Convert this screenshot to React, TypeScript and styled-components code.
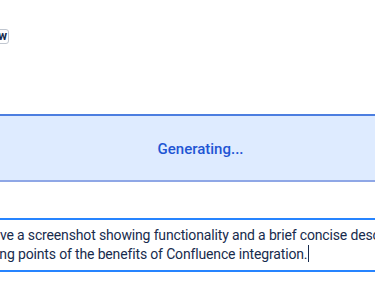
import styled, { createGlobalStyle } from "styled-components";

const GlobalStyle = createGlobalStyle`
  html, body {
    margin: 0;
    padding: 0;
    background: #ffffff;
    overflow: hidden;
  }
  body {
    font-family: Roboto, "Liberation Sans", sans-serif;
    color: #172b4d;
  }
`;

const Page = styled.div`
  width: 375px;
  height: 302px;
  overflow: hidden;
  display: flex;
  flex-direction: column;
`;

const Toolbar = styled.div`
  display: flex;
  align-items: center;
  padding-top: 29px;
  height: 15px;
`;

const ToolButton = styled.button`
  margin-left: -41px;
  height: 15px;
  padding: 0 1px 0 4px;
  border: 1px solid #c1c7d0;
  border-radius: 3px;
  background: #ffffff;
  font-family: inherit;
  font-size: 12px;
  font-weight: 700;
  line-height: 13px;
  color: #172b4d;
`;

const StatusPanel = styled.div`
  margin: 70px -10px 0;
  height: 64px;
  display: flex;
  align-items: center;
  justify-content: center;
  background: #deebff;
  border-top: 2px solid #4c7ee0;
  border-bottom: 2px solid #8fa7e6;
`;

const StatusText = styled.span`
  font-size: 15px;
  font-weight: 500;
  color: #1f55d4;
  margin-left: 26px;
  margin-top: 2px;
`;

const PromptBox = styled.div`
  margin: 36px -10px 0;
  padding: 6px 0 6px 10px;
  border-top: 2px solid #2684ff;
  border-bottom: 2px solid #2684ff;
  font-size: 14px;
  letter-spacing: -0.15px;
  line-height: 19px;
  color: #172b4d;
`;

const PromptLine = styled.div<{ $shift: number }>`
  white-space: nowrap;
  margin-left: ${(p) => -p.$shift}px;
`;

const Caret = styled.span`
  display: inline-block;
  width: 1px;
  height: 17px;
  margin-left: 1px;
  vertical-align: -3px;
  background: #172b4d;
`;

export default function App() {
  return (
    <Page>
      <GlobalStyle />
      <Toolbar>
        <ToolButton>Preview</ToolButton>
      </Toolbar>
      <StatusPanel>
        <StatusText>Generating...</StatusText>
      </StatusPanel>
      <PromptBox>
        <PromptLine $shift={15}>
          have a screenshot showing functionality and a brief concise description with
        </PromptLine>
        <PromptLine $shift={26}>
          talking points of the benefits of Confluence integration.
          <Caret />
        </PromptLine>
      </PromptBox>
    </Page>
  );
}
